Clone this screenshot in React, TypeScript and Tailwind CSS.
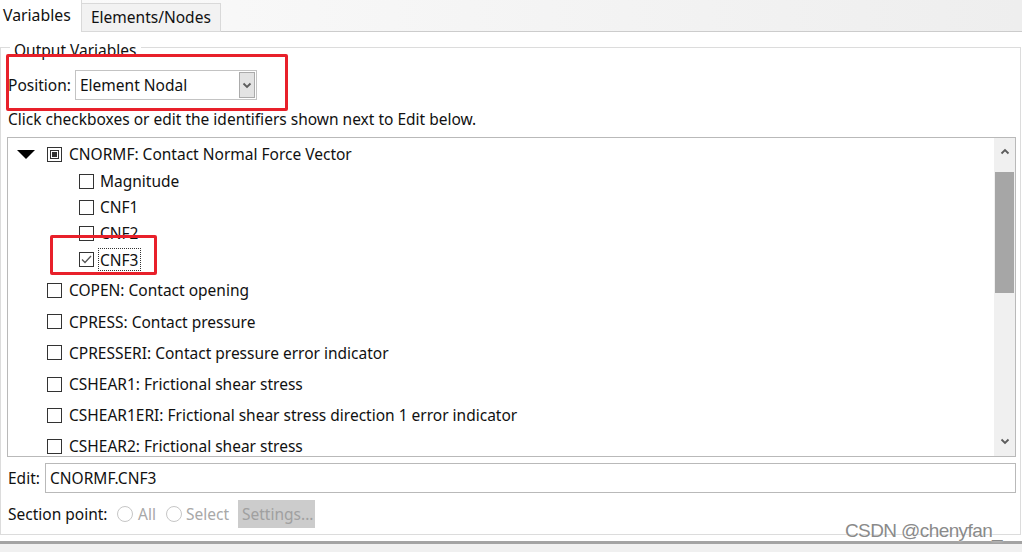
import React from "react";

function Box({ checked, partial }: { checked?: boolean; partial?: boolean }) {
  return (
    <div className="w-[15px] h-[15px] border border-[#333333] bg-white shrink-0 flex items-center justify-center">
      {partial && <div className="w-[9px] h-[9px] border border-[#333333] p-[1px]"><div className="w-full h-full bg-[#333333]" /></div>}
      {checked && (
        <svg width="13" height="13" viewBox="0 0 13 13">
          <path d="M2 6.5 L5 9.5 L11 3" fill="none" stroke="#555555" strokeWidth="1.3" />
        </svg>
      )}
    </div>
  );
}

function Chevron({ up }: { up?: boolean }) {
  return (
    <svg width="10" height="7" viewBox="0 0 10 7">
      <path d={up ? "M1.5 5.5 L5 2 L8.5 5.5" : "M1.5 1.5 L5 5 L8.5 1.5"} fill="none" stroke="#5c5c5c" strokeWidth="1.8" />
    </svg>
  );
}

function Radio() {
  return <div className="w-[16px] h-[16px] rounded-full border border-[#c6c6c6] bg-white shrink-0" />;
}

const topItems = [
  "COPEN: Contact opening",
  "CPRESS: Contact pressure",
  "CPRESSERI: Contact pressure error indicator",
  "CSHEAR1: Frictional shear stress",
  "CSHEAR1ERI: Frictional shear stress direction 1 error indicator",
  "CSHEAR2: Frictional shear stress",
];

export default function App() {
  return (
    <div className="w-[1022px] h-[552px] relative overflow-hidden bg-white font-['Noto_Sans',sans-serif] text-[15.5px] text-[#111111] flex flex-col">
      {/* Tab bar */}
      <div className="h-[32px] shrink-0 flex bg-gradient-to-r from-[#fbfbfb] to-[#eeeeee]">
        <div className="w-[82px] h-full bg-white border-r border-[#d9d9d9] flex items-center pl-[3px] text-[15.8px]">Variables</div>
        <div className="self-end w-[139px] h-[29px] border-t border-r border-b border-[#d9d9d9] bg-[#f2f2f2] flex items-center pl-[9px] text-[15.5px]">Elements/Nodes</div>
        <div className="flex-1 border-b border-[#cccccc]" />
      </div>

      {/* Body */}
      <div className="h-[509px] shrink-0 bg-white">
        <div className="relative mt-[15px] mr-[1px] h-[488px] border border-[#dcdcdc] flex flex-col">
          <span className="absolute left-[9px] top-[-8px] px-[4px] bg-white leading-[20px]">Output Variables</span>

          {/* Position row */}
          <div className="mt-[22px] h-[30px] flex items-center">
            <div className="w-[74px] pl-[7px] pt-[2px]">Position:</div>
            <div className="w-[182px] h-[30px] border border-[#c3c3c3] bg-white flex items-center">
              <span className="flex-1 pl-[4px] pt-[2px]">Element Nodal</span>
              <div className="w-[16px] h-[26px] mr-[1px] border border-[#ababab] bg-[#e3e3e3] flex items-center justify-center">
                <Chevron />
              </div>
            </div>
          </div>

          <div className="mt-[9px] h-[20px] leading-[20px] pl-[7px] whitespace-nowrap">Click checkboxes or edit the identifiers shown next to Edit below.</div>

          {/* List */}
          <div className="mt-[8px] ml-[6px] w-[1009px] h-[320px] border border-[#b9b9b9] flex overflow-hidden">
            <div className="flex-1 overflow-hidden pt-[2px]">
              <div className="h-[28px] flex items-center pl-[9px]">
                <svg width="18" height="9" viewBox="0 0 18 9" className="shrink-0">
                  <path d="M0 0 L18 0 L9 9 Z" fill="#000000" />
                </svg>
                <div className="ml-[12px]"><Box partial /></div>
                <span className="ml-[7px] pt-[1px]">CNORMF: Contact Normal Force Vector</span>
              </div>
              {["Magnitude", "CNF1", "CNF2"].map((t) => (
                <div key={t} className="h-[26px] flex items-center pl-[71px]">
                  <Box />
                  <span className="ml-[6px] pt-[1px]">{t}</span>
                </div>
              ))}
              <div className="h-[26px] flex items-center pl-[71px]">
                <Box checked />
                <span className="ml-[4px] px-[1px] h-[23px] leading-[22px] border border-dotted border-[#333333]">CNF3</span>
              </div>
              <div className="mt-[3px]">
                {topItems.map((t) => (
                  <div key={t} className="h-[31.2px] flex items-center pl-[39px]">
                    <Box />
                    <span className="ml-[7px] pt-[1px] whitespace-nowrap">{t}</span>
                  </div>
                ))}
              </div>
            </div>
            <div className="w-[21px] h-full bg-[#f0f0f0] flex flex-col items-center">
              <div className="h-[34px] w-full flex items-start justify-center pt-[10px]"><Chevron up /></div>
              <div className="w-[19px] h-[121px] bg-[#a6a6a6]" />
              <div className="flex-1" />
              <div className="h-[20px] w-full flex items-start justify-center pt-[2px]"><Chevron /></div>
            </div>
          </div>

          {/* Edit row */}
          <div className="mt-[6px] h-[30px] flex items-center">
            <div className="w-[44px] pl-[7px] pt-[2px]">Edit:</div>
            <div className="w-[971px] h-[30px] border border-[#b9b9b9] bg-white flex items-center pl-[4px] pt-[2px]">CNORMF.CNF3</div>
          </div>

          {/* Section point row */}
          <div className="mt-[7px] h-[28px] flex items-center">
            <div className="w-[116px] pl-[7px] pt-[2px] whitespace-nowrap">Section point:</div>
            <Radio />
            <span className="ml-[5px] w-[28px] pt-[2px] text-[#a8a8a8]">All</span>
            <Radio />
            <span className="ml-[4px] w-[52px] pt-[2px] text-[#a8a8a8]">Select</span>
            <div className="w-[77px] h-[28px] bg-[#cccccc] flex items-center pl-[4px] pt-[2px] text-[#a0a0a0] overflow-hidden whitespace-nowrap">Settings...</div>
          </div>
        </div>
      </div>

      <div className="h-[3px] shrink-0 bg-[#a3a3a3]" />
      <div className="flex-1 bg-[#f0f0f0]" />

      {/* annotations */}
      <div className="absolute left-[6px] top-[54px] w-[282px] h-[57px] border-[3px] border-[#e8202a] rounded-[2px]" />
      <div className="absolute left-[50px] top-[235px] w-[107px] h-[40px] border-[3px] border-[#e8202a] rounded-[2px]" />
      <div className="absolute left-[845px] top-[521px] font-['Liberation_Sans',sans-serif] text-[19px] leading-[19px] tracking-[-0.6px] text-[#8a8a8a] [text-shadow:0_0_2px_#ffffff]">CSDN @chenyfan_</div>
    </div>
  );
}
